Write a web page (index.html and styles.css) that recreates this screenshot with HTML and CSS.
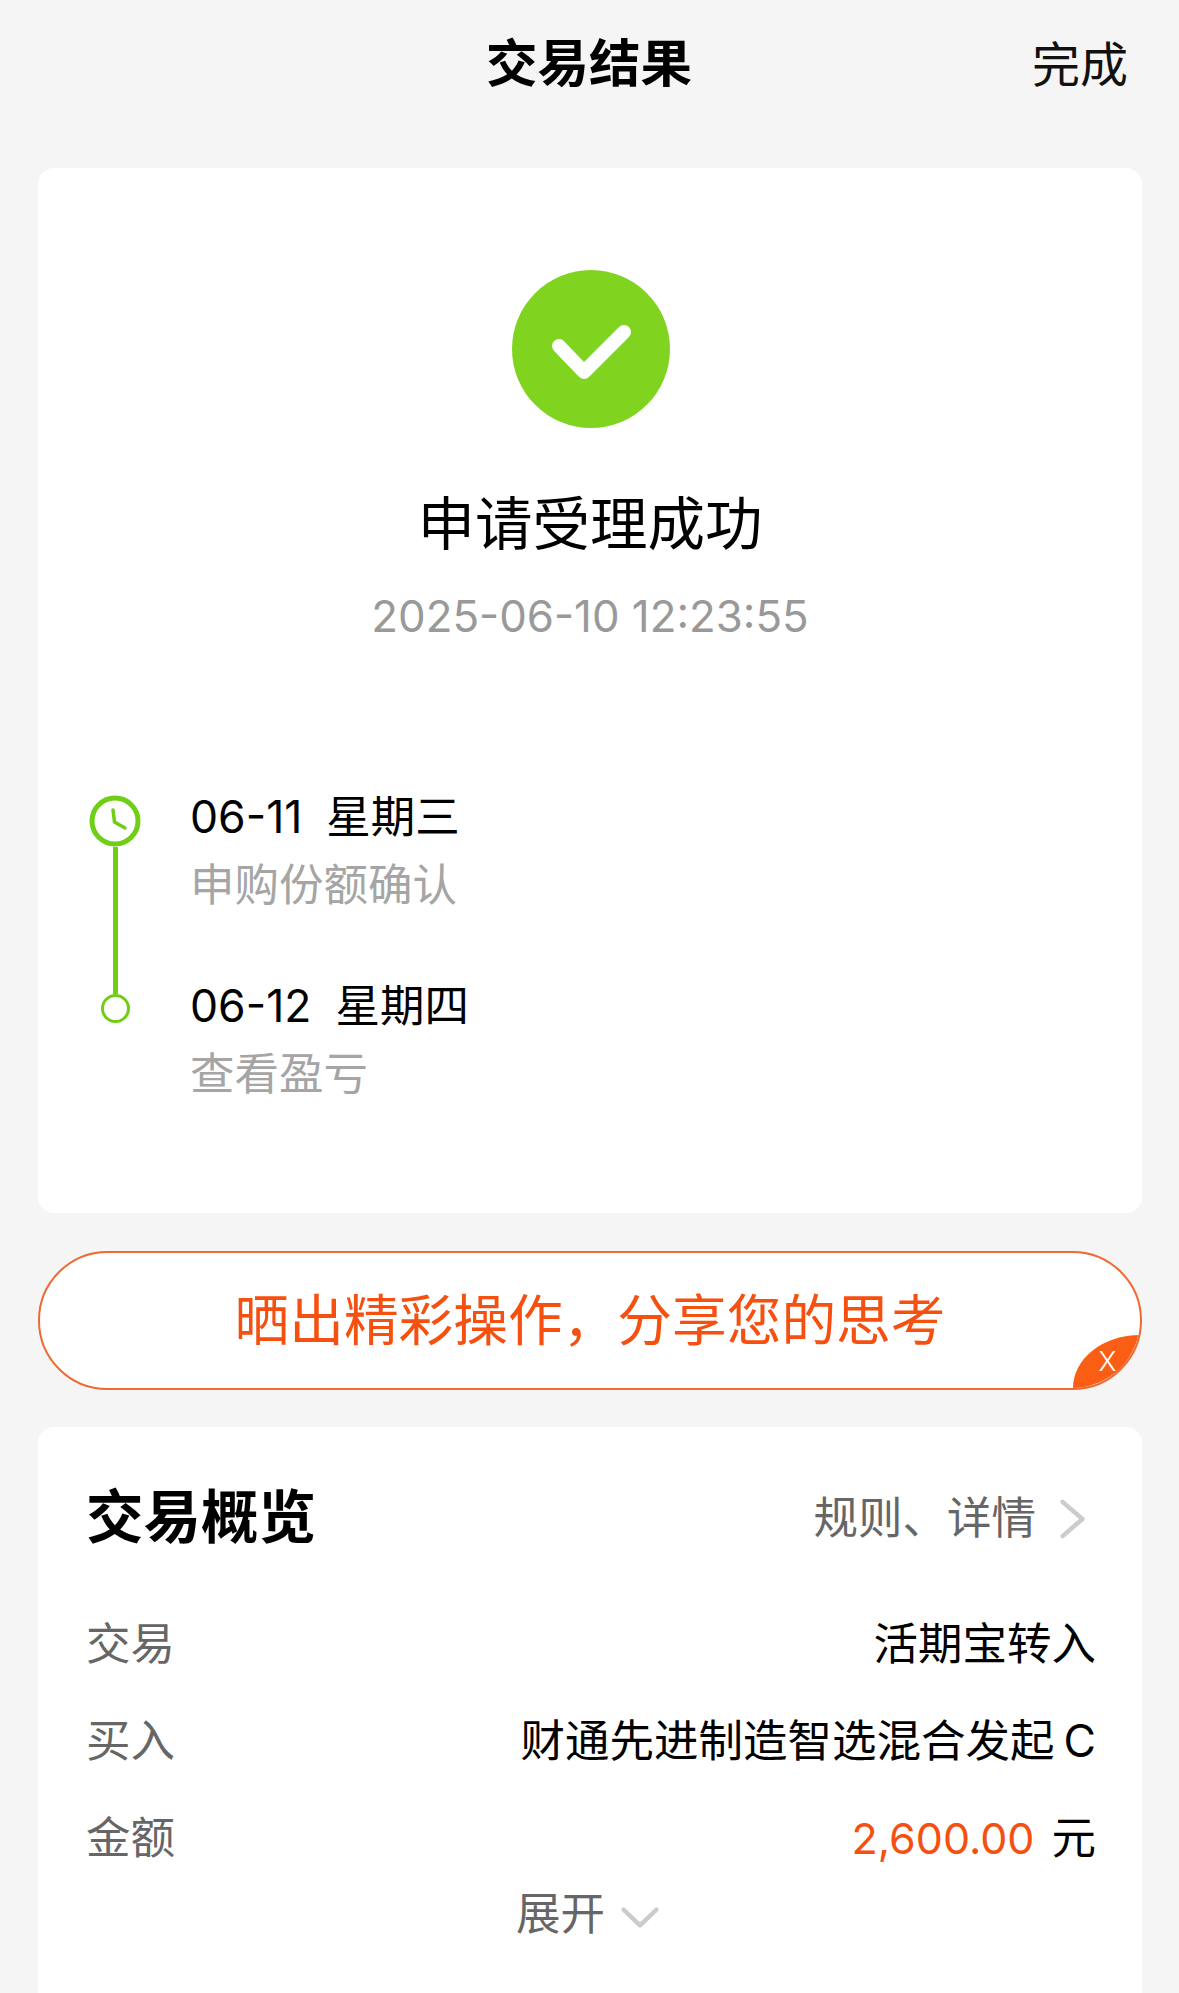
FILE: index.html
```html
<!DOCTYPE html>
<html lang="zh-CN">
<head>
  <meta charset="UTF-8" />
  <meta name="viewport" content="width=device-width, initial-scale=1.0"/>
  <title>交易结果</title>
  <link rel="stylesheet" href="styles.css">
</head>
<body>
  <div class="app">
    <div class="top-bar">
      <span></span>
      <h1>交易结果</h1>
      <button class="done">完成</button>
    </div>

    <div class="card result">
      <svg class="success-icon" viewBox="0 0 158 158">
        <circle cx="79" cy="79" r="79" fill="#80d41f"/>
        <path d="M47 76 L72 102 L112 62" fill="none" stroke="#fff" stroke-width="14" stroke-linecap="round" stroke-linejoin="round"/>
      </svg>
      <div class="result-title">申请受理成功</div>
      <div class="result-time">2025-06-10 12:23:55</div>

      <div class="timeline">
        <div class="rail">
          <svg class="rail-clock" viewBox="0 0 52 52">
            <circle cx="26" cy="26" r="23" fill="none" stroke="#6fcf17" stroke-width="5"/>
            <path d="M24 15 L25.5 27 L36 33" fill="none" stroke="#6fcf17" stroke-width="3.5" stroke-linecap="round" stroke-linejoin="round"/>
          </svg>
          <div class="rail-line"></div>
          <div class="rail-dot"></div>
        </div>
        <div class="steps">
          <div class="step">
            <div class="step-date">06-11<span>星期三</span></div>
            <div class="step-desc">申购份额确认</div>
          </div>
          <div class="step">
            <div class="step-date">06-12<span>星期四</span></div>
            <div class="step-desc">查看盈亏</div>
          </div>
        </div>
      </div>
    </div>

    <div class="share">
      晒出精彩操作，分享您的思考
      <div class="share-close">X</div>
    </div>

    <div class="card overview">
      <div class="overview-head">
        <h2>交易概览</h2>
        <div class="rules">
          规则、详情
          <svg class="chevron-right" viewBox="0 0 30 46">
            <path d="M4 4 L26 23 L4 42" fill="none" stroke="#ccc" stroke-width="5" stroke-linecap="round" stroke-linejoin="round"/>
          </svg>
        </div>
      </div>
      <div class="rows">
        <div class="row"><span class="label">交易</span><span>活期宝转入</span></div>
        <div class="row"><span class="label">买入</span><span>财通先进制造智选混合发起<span class="fund-class">C</span></span></div>
        <div class="row">
          <span class="label">金额</span>
          <span><span class="amount">2,600.00</span>元</span>
        </div>
      </div>
      <div class="expand">
        展开
        <svg class="chevron-down" viewBox="0 0 46 26">
          <path d="M4 4 L23 22 L42 4" fill="none" stroke="#ccc" stroke-width="5" stroke-linecap="round" stroke-linejoin="round"/>
        </svg>
      </div>
    </div>
  </div>
</body>
</html>
```

FILE: styles.css
```css
* {
  margin: 0;
  padding: 0;
  box-sizing: border-box;
}

body, html {
  width: 100%;
  height: 100%;
  overflow: hidden;
  background-color: #f5f5f5;
  color: #000;
  font-family: Inter, 'Noto Sans CJK SC', sans-serif;
  font-size: 44.5px;
}

.app {
  height: 1993px;
  padding: 0 37px 0 38px;
  overflow: hidden;
}

.top-bar {
  display: grid;
  grid-template-columns: 1fr auto 1fr;
  align-items: center;
  height: 168px;
  padding-bottom: 42px;
}

.top-bar h1 {
  margin-right: 2px;
  font-size: 51.5px;
  font-weight: 700;
  line-height: 70px;
}

.done {
  justify-self: end;
  margin: 4px 14px 0 0;
  background: none;
  border: none;
  color: #111;
  font-family: inherit;
  font-size: 48px;
  line-height: 70px;
}

.card {
  background: #fff;
  border-radius: 16px;
}

.result {
  display: flex;
  flex-direction: column;
  padding: 102px 0 106px;
}

.success-icon {
  width: 158px;
  height: 158px;
  margin-left: 2px;
  align-self: center;
}

.result-title {
  margin-top: 61px;
  font-size: 57.5px;
  line-height: 70px;
  text-align: center;
}

.result-time {
  margin-top: 28px;
  color: #999;
  font-size: 43.8px;
  line-height: 60px;
  text-align: center;
}

.timeline {
  display: flex;
  gap: 49px;
  margin-top: 137px;
  padding-left: 51px;
}

.rail {
  display: flex;
  flex-direction: column;
  align-items: center;
  width: 52px;
  margin: 11px 0 84px;
}

.rail-clock {
  width: 52px;
  height: 52px;
  flex: none;
}

.rail-line {
  flex-grow: 1;
  width: 5px;
  background: #6fcf17;
}

.rail-dot {
  width: 29px;
  height: 29px;
  flex: none;
  border: 3.5px solid #6fcf17;
  border-radius: 50%;
}

.steps {
  display: flex;
  flex-direction: column;
  gap: 55px;
}

.step-date,
.step-desc {
  line-height: 66px;
}

.step-date span {
  margin-left: 24px;
}

.step-desc {
  margin-top: 2px;
  color: #a5a5a5;
}

.share {
  position: relative;
  height: 139px;
  margin-top: 38px;
  border: 2px solid #ee6a33;
  border-radius: 70px;
  background: #fff;
  color: #f5500f;
  font-size: 54.7px;
  line-height: 134px;
  text-align: center;
  overflow: hidden;
}

.share-close {
  position: absolute;
  right: 0;
  bottom: 0;
  width: 67px;
  height: 53px;
  padding: 7px 0 0 2px;
  border-top-left-radius: 100%;
  background: #fa5d14;
  color: #fff;
  font-size: 27px;
  font-weight: 300;
  line-height: 40px;
}

.overview {
  margin-top: 37px;
  padding: 46px 46px 100px 48px;
}

.overview-head {
  display: flex;
  justify-content: space-between;
  align-items: center;
  height: 80px;
}

.overview-head h2 {
  font-size: 57.5px;
  font-weight: 700;
}

.rules {
  display: flex;
  align-items: center;
  gap: 23px;
  margin: 2px 10px 0 0;
  color: #666;
}

.chevron-right {
  width: 27px;
  height: 44px;
  margin-top: 10px;
}

.rows {
  display: flex;
  flex-direction: column;
  gap: 37px;
  margin-top: 61px;
}

.row {
  display: flex;
  justify-content: space-between;
  line-height: 60px;
}

.label {
  color: #666;
}

.fund-class {
  margin-left: 9px;
}

.amount {
  margin-right: 17px;
  color: #f5500f;
  font-size: 43px;
}

.expand {
  display: flex;
  justify-content: center;
  align-items: center;
  gap: 15px;
  margin-top: 16px;
  padding-right: 6px;
  color: #666;
  line-height: 60px;
}

.chevron-down {
  width: 40px;
  height: 23px;
  margin-top: 6px;
}
```
